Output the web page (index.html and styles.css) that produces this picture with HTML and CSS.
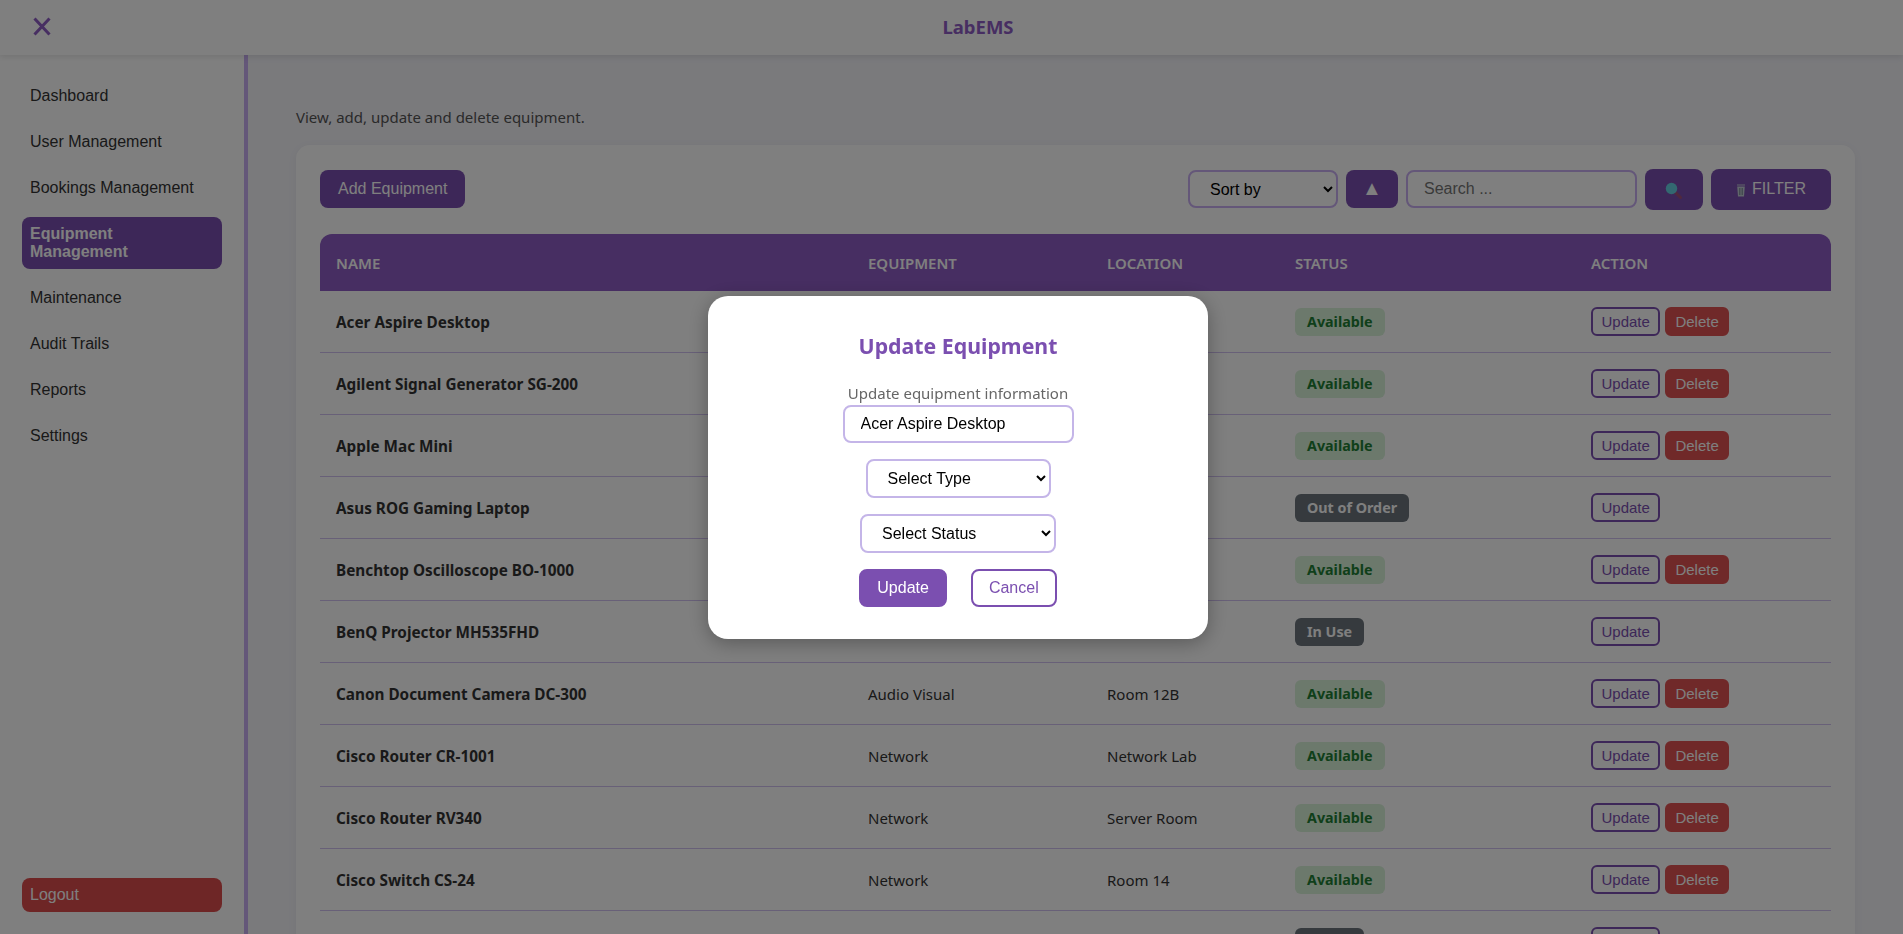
FILE: index.html
```html
<!DOCTYPE html>
<html lang="en">
<head>
    <meta charset="UTF-8">
    <meta name="viewport" content="width=device-width, initial-scale=1.0">
    <title>LabEMS - Equipment Management</title>
    <link rel="stylesheet" href="styles.css">
</head>
<body>

    <header class="topbar">
        <button class="menu-toggle" type="button" aria-label="Close menu">
            <svg width="18" height="19" viewBox="0 0 18 19"><path d="M1.5 1.5 L16.5 17.5 M16.5 1.5 L1.5 17.5" fill="none" stroke="currentColor" stroke-width="3"/></svg>
        </button>
        <div class="brand">LabEMS</div>
    </header>

    <div class="layout">
        <aside class="sidebar">
            <nav class="side-nav">
                <a href="#">Dashboard</a>
                <a href="#">User Management</a>
                <a href="#">Bookings Management</a>
                <a href="#" class="active">Equipment Management</a>
                <a href="#">Maintenance</a>
                <a href="#">Audit Trails</a>
                <a href="#">Reports</a>
                <a href="#">Settings</a>
            </nav>
            <a href="#" class="logout">Logout</a>
        </aside>

        <main class="content">
            <p class="page-desc">View, add, update and delete equipment.</p>

            <section class="card">
                <div class="toolbar">
                    <button class="btn" type="button">Add Equipment</button>
                    <div class="toolbar-right">
                        <select class="field sort-select">
                            <option>Sort by</option>
                        </select>
                        <button class="btn sort-dir" type="button">▲</button>
                        <input class="field search-input" type="text" placeholder="Search ...">
                        <button class="btn btn-tall search-btn" type="button" aria-label="Search">
                            <svg width="18" height="18" viewBox="0 0 18 18">
                                <path d="M10 10 L15.5 15.5" stroke="#a0507c" stroke-width="3" stroke-linecap="round"/>
                                <circle cx="6.5" cy="6.5" r="5.7" fill="#66d0e2"/>
                            </svg>
                        </button>
                        <button class="btn btn-tall filter-btn" type="button">
                            <svg class="trash-icon" width="10" height="14" viewBox="0 0 10 14">
                                <path d="M1 1.5 H9 V2.5 H1 Z M1.2 3.5 H8.8 L8 13.5 H2 Z" fill="#c3ccd6"/>
                                <path d="M3.5 5 V12 M5 5 V12 M6.5 5 V12" stroke="#7a8894" stroke-width="0.8"/>
                            </svg>
                            FILTER
                        </button>
                    </div>
                </div>

                <table class="equip-table">
                    <thead>
                        <tr>
                            <th class="col-name">Name</th>
                            <th class="col-type">Equipment</th>
                            <th class="col-loc">Location</th>
                            <th class="col-status">Status</th>
                            <th>Action</th>
                        </tr>
                    </thead>
                    <tbody>
                        <tr>
                            <td class="name">Acer Aspire Desktop</td><td>Computer</td><td>Room 12A</td>
                            <td><span class="pill available">Available</span></td>
                            <td><div class="actions"><button class="act-update">Update</button><button class="act-delete">Delete</button></div></td>
                        </tr>
                        <tr>
                            <td class="name">Agilent Signal Generator SG-200</td><td>Electronics</td><td>Room 14</td>
                            <td><span class="pill available">Available</span></td>
                            <td><div class="actions"><button class="act-update">Update</button><button class="act-delete">Delete</button></div></td>
                        </tr>
                        <tr>
                            <td class="name">Apple Mac Mini</td><td>Computer</td><td>Room 12A</td>
                            <td><span class="pill available">Available</span></td>
                            <td><div class="actions"><button class="act-update">Update</button><button class="act-delete">Delete</button></div></td>
                        </tr>
                        <tr>
                            <td class="name">Asus ROG Gaming Laptop</td><td>Computer</td><td>Room 12A</td>
                            <td><span class="pill muted">Out of Order</span></td>
                            <td><div class="actions"><button class="act-update">Update</button></div></td>
                        </tr>
                        <tr>
                            <td class="name">Benchtop Oscilloscope BO-1000</td><td>Electronics</td><td>Room 14</td>
                            <td><span class="pill available">Available</span></td>
                            <td><div class="actions"><button class="act-update">Update</button><button class="act-delete">Delete</button></div></td>
                        </tr>
                        <tr>
                            <td class="name">BenQ Projector MH535FHD</td><td>Audio Visual</td><td>Room 12B</td>
                            <td><span class="pill muted">In Use</span></td>
                            <td><div class="actions"><button class="act-update">Update</button></div></td>
                        </tr>
                        <tr>
                            <td class="name">Canon Document Camera DC-300</td><td>Audio Visual</td><td>Room 12B</td>
                            <td><span class="pill available">Available</span></td>
                            <td><div class="actions"><button class="act-update">Update</button><button class="act-delete">Delete</button></div></td>
                        </tr>
                        <tr>
                            <td class="name">Cisco Router CR-1001</td><td>Network</td><td>Network Lab</td>
                            <td><span class="pill available">Available</span></td>
                            <td><div class="actions"><button class="act-update">Update</button><button class="act-delete">Delete</button></div></td>
                        </tr>
                        <tr>
                            <td class="name">Cisco Router RV340</td><td>Network</td><td>Server Room</td>
                            <td><span class="pill available">Available</span></td>
                            <td><div class="actions"><button class="act-update">Update</button><button class="act-delete">Delete</button></div></td>
                        </tr>
                        <tr>
                            <td class="name">Cisco Switch CS-24</td><td>Network</td><td>Room 14</td>
                            <td><span class="pill available">Available</span></td>
                            <td><div class="actions"><button class="act-update">Update</button><button class="act-delete">Delete</button></div></td>
                        </tr>
                        <tr>
                            <td class="name">Cisco Switch SG350</td><td>Network</td><td>Server Room</td>
                            <td><span class="pill muted">In Use</span></td>
                            <td><div class="actions"><button class="act-update">Update</button></div></td>
                        </tr>
                    </tbody>
                </table>
            </section>
        </main>
    </div>

    <div class="overlay">
        <div class="modal">
            <h2>Update Equipment</h2>
            <p class="modal-sub">Update equipment information</p>
            <input class="modal-field modal-input" type="text" value="Acer Aspire Desktop">
            <select class="modal-field select-type">
                <option>Select Type</option>
            </select>
            <select class="modal-field select-status">
                <option>Select Status</option>
            </select>
            <div class="modal-actions">
                <button class="modal-btn modal-save" type="button">Update</button>
                <button class="modal-btn modal-cancel" type="button">Cancel</button>
            </div>
        </div>
    </div>

</body>
</html>
```

FILE: styles.css
```css
* {
    box-sizing: border-box;
}

body {
    margin: 0;
    height: 100vh;
    overflow: hidden;
    display: flex;
    flex-direction: column;
    font-family: "Noto Sans", "Open Sans", sans-serif;
    color: #333;
    background-color: #f4f4f9;
}

button, input, select {
    font-family: "Liberation Sans", Arial, sans-serif;
}

/* top bar */
.topbar {
    height: 55px;
    flex-shrink: 0;
    display: flex;
    align-items: center;
    padding-left: 33px;
    background-color: white;
    box-shadow: 0 2px 6px rgba(0, 0, 0, 0.1);
    position: relative;
    z-index: 2;
}

.menu-toggle {
    width: 20px;
    padding: 0;
    margin-top: -3px;
    border: none;
    background: none;
    color: #8e5cc4;
    display: flex;
}

.brand {
    flex: 1;
    margin-top: -2px;
    text-align: center;
    font-size: 18.5px;
    font-weight: 700;
    color: #8e5cc4;
}

/* sidebar */
.layout {
    flex: 1;
    display: flex;
    min-height: 0;
}

.sidebar {
    width: 248px;
    flex-shrink: 0;
    display: flex;
    flex-direction: column;
    justify-content: space-between;
    padding: 24px 22px 22px;
    background-color: white;
    border-right: 4px solid #c8aef2;
    font-family: "Liberation Sans", Arial, sans-serif;
    font-size: 16px;
    line-height: 18px;
}

.side-nav {
    display: flex;
    flex-direction: column;
    gap: 12px;
}

.side-nav a, .logout {
    display: block;
    padding: 8px;
    border-radius: 8px;
    color: #333;
    text-decoration: none;
}

.side-nav a.active {
    background-color: #7b4fb0;
    color: white;
    font-weight: bold;
}

.logout {
    background-color: #dc4c4c;
    color: white;
}

/* main area */
.content {
    flex: 1;
    min-width: 0;
    padding: 51px 48px 0;
}

.page-desc {
    margin: 0 0 17px;
    font-size: 15px;
    line-height: 22px;
    color: #555;
}

.card {
    padding: 24px;
    border-radius: 14px;
    background-color: white;
    box-shadow: 0 2px 10px rgba(0, 0, 0, 0.05);
}

.toolbar {
    display: flex;
    justify-content: space-between;
    align-items: flex-start;
    margin-bottom: 24px;
}

.toolbar-right {
    display: flex;
    align-items: flex-start;
    gap: 8px;
}

.btn {
    height: 38px;
    margin-top: 1px;
    padding: 0 18px;
    border: none;
    border-radius: 8px;
    background-color: #7b4fb0;
    color: white;
    font-size: 16px;
}

.btn-tall {
    height: 41px;
    margin-top: 0;
}

.field {
    height: 38px;
    margin-top: 1px;
    border: 2px solid #c8aef2;
    border-radius: 8px;
    background-color: white;
    font-size: 16px;
    color: black;
}

.sort-select {
    width: 150px;
    padding: 0 16px;
}

.sort-dir {
    width: 52px;
    padding: 0 0 2px;
    font-size: 20px;
    line-height: 1;
}

.search-input {
    width: 231px;
    padding: 0 16px;
}

.search-input::placeholder {
    color: #757575;
}

.search-btn {
    width: 58px;
    padding: 3px 0 0;
    display: flex;
    justify-content: center;
    align-items: center;
}

.filter-btn {
    width: 120px;
    padding: 0 0 2px;
    display: flex;
    justify-content: center;
    align-items: center;
    gap: 6px;
}

.trash-icon {
    margin-top: 3px;
}

/* table */
.equip-table {
    width: 100%;
    border-collapse: separate;
    border-spacing: 0;
    table-layout: fixed;
    font-size: 15px;
}

.equip-table th {
    height: 57px;
    padding: 0 16px;
    text-align: left;
    font-size: 15px;
    font-weight: 600;
    text-transform: uppercase;
    color: white;
    background-color: #8e5cc4;
}

.equip-table th:first-child {
    border-top-left-radius: 12px;
}

.equip-table th:last-child {
    border-top-right-radius: 12px;
}

.col-name {
    width: 532px;
}

.col-type {
    width: 239px;
}

.col-loc {
    width: 188px;
}

.col-status {
    width: 296px;
}

.equip-table td {
    height: 62px;
    padding: 0 16px;
    border-bottom: 1px solid #d0c0f0;
}

.equip-table td.name {
    font-size: 15.3px;
    font-weight: 700;
}

.pill {
    display: inline-block;
    padding: 4px 12px;
    border-radius: 6px;
    font-size: 14.3px;
    line-height: 20px;
    font-weight: 700;
    vertical-align: middle;
}

.pill.available {
    background-color: #d8f2d8;
    color: #1e7e34;
}

.pill.muted {
    background-color: #6c757d;
    color: white;
}

.actions {
    display: flex;
    gap: 5px;
}

.act-update, .act-delete {
    height: 29px;
    padding: 0 8.5px;
    border-radius: 6px;
    font-size: 15px;
}

.act-update {
    border: 2px solid #7b4fb0;
    background-color: white;
    color: #7b4fb0;
}

.act-delete {
    padding: 0 8px;
    border: 2px solid #e05252;
    background-color: #e05252;
    color: white;
}

/* modal */
.overlay {
    position: fixed;
    top: 0;
    left: 0;
    width: 100%;
    height: 100%;
    z-index: 10;
    padding-left: 13px;
    display: flex;
    justify-content: center;
    align-items: center;
    background-color: rgba(0, 0, 0, 0.5);
}

.modal {
    width: 500px;
    height: 343px;
    padding-top: 35px;
    display: flex;
    flex-direction: column;
    align-items: center;
    border-radius: 20px;
    background-color: white;
    box-shadow: 0 4px 20px rgba(0, 0, 0, 0.3);
}

.modal h2 {
    margin: 0 0 22px;
    font-size: 21.3px;
    line-height: 30px;
    font-weight: 700;
    color: #7b4fb0;
}

.modal-sub {
    margin: 0 0 2px;
    font-size: 15px;
    line-height: 20px;
    color: #666;
}

.modal-field {
    height: 39px;
    margin-bottom: 16px;
    padding: 0 16px;
    border: 2px solid #c4b5e8;
    border-radius: 8px;
    background-color: white;
    font-size: 16px;
    color: black;
}

.modal-input {
    width: 231px;
    height: 38px;
}

.select-type {
    width: 185px;
}

.select-status {
    width: 196px;
}

.modal-actions {
    display: flex;
    gap: 24px;
}

.modal-btn {
    height: 38px;
    padding: 0 16px;
    border: 2px solid #7b4fb0;
    border-radius: 8px;
    font-size: 16px;
}

.modal-save {
    background-color: #7b4fb0;
    color: white;
}

.modal-cancel {
    background-color: white;
    color: #7b4fb0;
}
```
